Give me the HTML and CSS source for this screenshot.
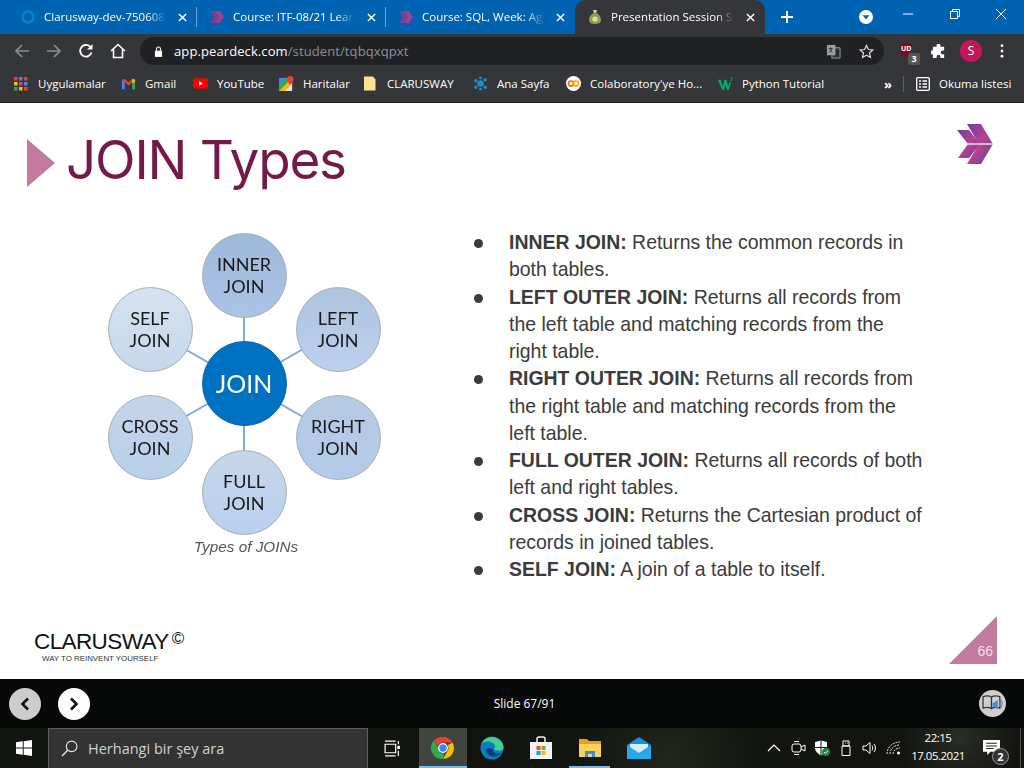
FILE: index.html
```html
<!DOCTYPE html>
<html lang="tr">
<head>
<meta charset="utf-8">
<title>Presentation Session</title>
<link rel="stylesheet" href="styles.css">
</head>
<body>
<svg class="defs" aria-hidden="true">
  <defs>
    <linearGradient id="chev" x1="0" y1="0" x2="1" y2="1">
      <stop offset="0" stop-color="#6b3fa0"/><stop offset=".5" stop-color="#b8438f"/><stop offset="1" stop-color="#5a3f9e"/>
    </linearGradient>
    <symbol id="chevrons" viewBox="0 0 36 40">
      <path fill="url(#chev)" d="M0 6h12l11 14-11 14H1l10-14z"/>
      <path fill="url(#chev)" d="M10 0h14l12 20-12 20H10l12-20z"/>
      <path fill="#fff" d="M4 19.4h32v1.2H4z"/>
    </symbol>
    <symbol id="favchev" viewBox="0 0 16 16">
      <path fill="#7d3f96" d="M1 2h5l4 6-4 6H1l4-6z"/>
      <path fill="#a0408f" d="M6 2h5l4 6-4 6H6l4-6z"/>
    </symbol>
    <symbol id="close" viewBox="0 0 10 10">
      <path d="M1 1l8 8M9 1l-8 8" stroke="#fff" stroke-width="1.6" fill="none"/>
    </symbol>
  </defs>
</svg>

<div class="tabstrip">
  <div class="tab">
    <svg class="fav" viewBox="0 0 16 16"><circle cx="8" cy="8" r="5.5" fill="none" stroke="#0a84c8" stroke-width="2.4"/></svg>
    <span class="tab-title">Clarusway-dev-750608</span>
    <svg class="tab-x"><use href="#close"/></svg>
  </div>
  <div class="tab">
    <svg class="fav"><use href="#favchev"/></svg>
    <span class="tab-title">Course: ITF-08/21 Learn</span>
    <svg class="tab-x"><use href="#close"/></svg>
  </div>
  <div class="tab tab-last">
    <svg class="fav"><use href="#favchev"/></svg>
    <span class="tab-title">Course: SQL, Week: Agg</span>
    <svg class="tab-x"><use href="#close"/></svg>
  </div>
  <div class="tab tab-active">
    <svg class="fav" viewBox="0 0 16 16"><path fill="#8f9a52" d="M6 1h4l-1 3c3 1 5 4 5 7 0 3-3 4-6 4s-6-1-6-4c0-3 2-6 5-7z"/><circle cx="8" cy="10" r="2.6" fill="#dfe48a"/><path d="M6 1h4l-1 3H7z" fill="#c9c9b0"/></svg>
    <span class="tab-title">Presentation Session Stu</span>
    <svg class="tab-x"><use href="#close"/></svg>
  </div>
  <svg class="newtab" viewBox="0 0 12 12"><path d="M6 0v12M0 6h12" stroke="#fff" stroke-width="2"/></svg>
  <svg class="profile-drop" viewBox="0 0 14 14"><circle cx="7" cy="7" r="7" fill="#fff"/><path d="M3.6 5.2h6.8L7 9.4z" fill="#0063b1"/></svg>
  <div class="winctl">
    <svg viewBox="0 0 12 12"><path d="M1 6h10" stroke="#fff" fill="none"/></svg>
    <svg viewBox="0 0 12 12"><path d="M1.5 3.5h7v7h-7zM3.5 3.5v-2h7v7h-2" stroke="#fff" fill="none"/></svg>
    <svg viewBox="0 0 12 12"><path d="M1 1l10 10M11 1L1 11" stroke="#fff" fill="none"/></svg>
  </div>
</div>

<div class="toolbar">
  <svg class="tb-btn" viewBox="0 0 16 16"><path d="M15 8H2M8 2L2 8l6 6" stroke="#8a8c8f" stroke-width="1.7" fill="none"/></svg>
  <svg class="tb-btn" viewBox="0 0 16 16"><path d="M1 8h13M8 2l6 6-6 6" stroke="#8a8c8f" stroke-width="1.7" fill="none"/></svg>
  <svg class="tb-btn" viewBox="0 0 16 16"><path d="M13.5 9.5A5.8 5.8 0 1 1 12 3.6" stroke="#fff" stroke-width="1.8" fill="none"/><path d="M14.5 1v5.5H9z" fill="#fff"/></svg>
  <svg class="tb-btn" viewBox="0 0 16 16"><path d="M1 8l7-6.500L15 8M3.500 6.500V14.500h9V6.500" stroke="#fff" stroke-width="1.6" fill="none"/></svg>
  <div class="omnibox">
    <svg class="lock" viewBox="0 0 10 12"><path d="M1 5h8v7H1z" fill="#fff"/><path d="M2.8 5V3.2a2.2 2.2 0 0 1 4.4 0V5" stroke="#fff" stroke-width="1.2" fill="none"/></svg>
    <span class="url"><span class="url-host">app.peardeck.com</span>/student/tqbqxqpxt</span>
    <svg class="omni-ic translate" viewBox="0 0 16 16"><path d="M8 4h7v11H6z" fill="#35363a" stroke="#9aa0a6"/><rect x="1" y="1" width="9" height="11" fill="#9aa0a6"/><path d="M3 5h4M5 3.500v1.500M3.500 9l3-4M4 6l3 3M10 8h4M12 7v1M10.500 13l3-5M11 10l3 3" stroke="#202124" stroke-width=".9" fill="none"/></svg>
    <svg class="omni-ic" viewBox="0 0 16 16"><path d="M8 1.500l2 4.400 4.800.5-3.600 3.200 1 4.700L8 11.900l-4.200 2.400 1-4.700L1.200 6.400 6 5.900z" stroke="#dcdcdc" stroke-width="1.3" fill="none"/></svg>
  </div>
  <div class="ublock">
    <svg viewBox="0 0 16 18"><path d="M8 0l7 2.500c0 7-2 12-7 15.500C3 14.500 1 9.500 1 2.500z" fill="#7b0f12"/></svg>
    <span class="ub-txt">UD</span>
    <span class="ub-badge">3</span>
  </div>
  <svg class="puzzle" viewBox="0 0 16 16"><path fill="#fff" d="M6 1.500a2 2 0 0 1 4 0V3h4v4h-1.500a2 2 0 0 0 0 4H14v4h-4v-1.500a2 2 0 0 0-4 0V15H2v-4H.8a2 2 0 0 1 0-4H2V3h4z"/></svg>
  <span class="avatar">S</span>
  <svg class="kebab" viewBox="0 0 4 16"><circle cx="2" cy="2" r="1.600" fill="#fff"/><circle cx="2" cy="8" r="1.600" fill="#fff"/><circle cx="2" cy="14" r="1.600" fill="#fff"/></svg>
</div>

<div class="bookmarks">
  <div class="bm bm-apps">
    <svg viewBox="0 0 14 14"><g><rect x="0" y="0" width="3.500" height="3.500" fill="#ea4335"/><rect x="5" y="0" width="3.500" height="3.500" fill="#4285f4"/><rect x="10" y="0" width="3.500" height="3.500" fill="#ea4335"/><rect x="0" y="5" width="3.500" height="3.500" fill="#fbbc05"/><rect x="5" y="5" width="3.500" height="3.500" fill="#ea4335"/><rect x="10" y="5" width="3.500" height="3.500" fill="#4285f4"/><rect x="0" y="10" width="3.500" height="3.500" fill="#34a853"/><rect x="5" y="10" width="3.500" height="3.500" fill="#fbbc05"/><rect x="10" y="10" width="3.500" height="3.500" fill="#ea4335"/></g></svg>
    <span>Uygulamalar</span>
  </div>
  <div class="bm bm-gmail">
    <svg viewBox="0 0 16 14"><path d="M1 3v10h3V6z" fill="#4285f4"/><path d="M15 3v10h-3V6z" fill="#34a853"/><path d="M1 3l3-1 4 4 4-4 3 1-7 6z" fill="#ea4335"/><path d="M12 2l3 1v2l-3 2z" fill="#fbbc05"/></svg>
    <span>Gmail</span>
  </div>
  <div class="bm bm-yt">
    <svg viewBox="0 0 16 12"><rect width="16" height="11" y=".5" rx="2.500" fill="#f00"/><path d="M6.500 3.500l4 2.500-4 2.500z" fill="#fff"/></svg>
    <span>YouTube</span>
  </div>
  <div class="bm bm-maps">
    <svg viewBox="0 0 16 16"><rect y="2" width="14" height="14" fill="#34a853"/><path d="M0 16L14 2v6l-8 8z" fill="#fbbc05"/><path d="M6 16l8-8v8z" fill="#dfe3e8"/><path d="M0 2h8L0 10z" fill="#4285f4"/><path d="M12 0a3.500 3.500 0 0 1 3.500 3.500C15.500 6 12 9.500 12 9.500S8.500 6 8.500 3.500A3.500 3.500 0 0 1 12 0z" fill="#ea4335"/></svg>
    <span>Haritalar</span>
  </div>
  <div class="bm bm-folder">
    <svg viewBox="0 0 12 14"><path d="M0 0h9l2.500 3v11H0z" fill="#fde293"/></svg>
    <span>CLARUSWAY</span>
  </div>
  <div class="bm bm-ana">
    <svg viewBox="0 0 16 16"><g fill="#1f8fc8"><circle cx="8" cy="8" r="3.500"/><circle cx="3" cy="5" r="1.800"/><circle cx="13" cy="4" r="1.800"/><circle cx="3" cy="12" r="1.800"/><circle cx="13" cy="12" r="1.800"/><circle cx="8" cy="2" r="1.500"/><circle cx="8" cy="14" r="1.500"/></g></svg>
    <span>Ana Sayfa</span>
  </div>
  <div class="bm bm-colab">
    <svg viewBox="0 0 16 16"><circle cx="8" cy="8" r="8" fill="#fff"/><circle cx="5.300" cy="8" r="2.700" fill="none" stroke="#e8710a" stroke-width="1.800"/><circle cx="10.700" cy="8" r="2.700" fill="none" stroke="#f9ab00" stroke-width="1.800"/></svg>
    <span>Colaboratory'ye Ho...</span>
  </div>
  <div class="bm bm-w3">
    <svg viewBox="0 0 16 14"><path d="M0 3h3l2 7 2-7h2l2 7 1-4h2l-2.500 8h-2L8 8l-1.500 6h-2z" fill="#04aa6d"/><path d="M13 1h2.500l-1 1.500a1 1 0 1 1-1.500 1" stroke="#04aa6d" stroke-width=".8" fill="none"/></svg>
    <span>Python Tutorial</span>
  </div>
  <div class="bm-end">
    <span class="more">»</span>
    <span class="bm-sep"></span>
    <svg class="reading" viewBox="0 0 14 14"><rect x=".7" y=".7" width="12.600" height="12.600" rx="1" fill="none" stroke="#fff" stroke-width="1.300"/><path d="M3 4h2M6.500 4H11M3 7h2M6.500 7H11M3 10h2M6.500 10H11" stroke="#fff" stroke-width="1.300"/></svg>
    <span class="bm-text">Okuma listesi</span>
  </div>
</div>

<main class="slide">
  <header class="slide-head">
    <span class="title-arrow"></span>
    <h1 class="slide-title">JOIN Types</h1>
    <svg class="slide-logo"><use href="#chevrons"/></svg>
  </header>
  <section class="slide-body">
    <figure class="diagram">
      <svg class="spokes" viewBox="0 0 290 320">
        <path d="M144 50v220M50 104l188 108M238 104L50 212" stroke="#7eaadc" stroke-width="2" fill="none"/>
      </svg>
      <div class="node n-inner">INNER<br>JOIN</div>
      <div class="node n-left">LEFT<br>JOIN</div>
      <div class="node n-right">RIGHT<br>JOIN</div>
      <div class="node n-full">FULL<br>JOIN</div>
      <div class="node n-cross">CROSS<br>JOIN</div>
      <div class="node n-self">SELF<br>JOIN</div>
      <div class="node n-center">JOIN</div>
      <figcaption class="caption">Types of JOINs</figcaption>
    </figure>
    <ul class="joins">
      <li><b>INNER JOIN:</b> Returns the common records in both tables.</li>
      <li><b>LEFT OUTER JOIN:</b> Returns all records from the left table and matching records from the right table.</li>
      <li><b>RIGHT OUTER JOIN:</b> Returns all records from the right table and matching records from the left table.</li>
      <li><b>FULL OUTER JOIN:</b> Returns all records of both left and right tables.</li>
      <li><b>CROSS JOIN:</b> Returns the Cartesian product of records in joined tables.</li>
      <li><b>SELF JOIN:</b> A join of a table to itself.</li>
    </ul>
  </section>
  <footer class="slide-foot">
    <div class="brand">
      <div class="brand-name">CLARUSWAY<sup class="brand-c">©</sup></div>
      <div class="brand-tag">WAY TO REINVENT YOURSELF</div>
    </div>
    <div class="pageno"><span>66</span></div>
  </footer>
</main>

<div class="deckbar">
  <button class="nav-btn nav-prev"><svg viewBox="0 0 10 14"><path d="M8 1.500L2.500 7 8 12.500" stroke="#111" stroke-width="2.600" fill="none"/></svg></button>
  <button class="nav-btn nav-next"><svg viewBox="0 0 10 14"><path d="M2 1.500L7.500 7 2 12.500" stroke="#111" stroke-width="2.600" fill="none"/></svg></button>
  <span class="counter">Slide 67/91</span>
  <span class="audio"><svg viewBox="0 0 20 18"><path d="M1 2.500c3-1 6-1 8 .5 2-1.500 5-1.500 8-.5v11c-3-1-6-1-8 .5-2-1.500-5-1.500-8-.5zM9 3v11" stroke="#333" stroke-width="1.200" fill="none"/><path d="M10 8h2l3-2.500v9L12 12h-2z" fill="#3f8fd0"/><path d="M16.500 7c1 1.500 1 3 0 4.500M18 5.500c1.500 2.500 1.500 5 0 7.500" stroke="#3f8fd0" stroke-width="1" fill="none"/></svg></span>
</div>

<div class="taskbar">
  <div class="start"><svg viewBox="0 0 16 16"><path fill="#fff" d="M0 2.300L6.800 1.300V7.600H0zM7.700 1.200L16 0V7.600H7.700zM0 8.400H6.800V14.700L0 13.700zM7.700 8.400H16V16L7.700 14.800z"/></svg></div>
  <div class="search">
    <svg viewBox="0 0 16 16"><circle cx="10" cy="6" r="5" stroke="#e6e6e6" stroke-width="1.100" fill="none"/><path d="M6.500 9.500L1 15" stroke="#e6e6e6" stroke-width="1.300"/></svg>
    <span>Herhangi bir şey ara</span>
  </div>
  <div class="taskview"><svg viewBox="0 0 16 16"><path d="M1 1h10M1 15h10M1 4h10v8H1zM13.500 1v3M13.500 10v5" stroke="#fff" stroke-width="1.100" fill="none"/><rect x="12.500" y="5.500" width="2.500" height="3" fill="#fff"/></svg></div>
  <div class="tile tile-active">
    <svg viewBox="0 0 24 24"><path d="M12 1a11 11 0 0 1 9.500 5.500H12a5.500 5.500 0 0 0-5 3.200L3 4.500A11 11 0 0 1 12 1z" fill="#ea4335"/><path d="M21.500 6.500A11 11 0 0 1 12 23l4.700-8.200a5.500 5.500 0 0 0 0-5.500z" fill="#fbbc05"/><path d="M12 23A11 11 0 0 1 3 4.500l4.700 8.200a5.500 5.500 0 0 0 5.500 4.800z" fill="#34a853"/><circle cx="12" cy="12" r="4.300" fill="#4285f4" stroke="#fff" stroke-width="1.200"/></svg>
  </div>
  <div class="tile">
    <svg viewBox="0 0 24 24"><circle cx="12" cy="12" r="11.500" fill="#0c7bc4"/><path d="M23.500 12c0-6-5-11-11.500-11C7 1 3 4 1.500 8 4 5.500 8 5 11 6c4 1.500 5 5 3 7.500 3 1.500 9.500 2 9.500-1.500z" fill="#45d08a"/><path d="M6 14c0 5 6 8 11 6 2-.8 3.500-2 4.500-3.500-4 2-9 1-8.500-3.500-3-1-7-1-7 1z" fill="#0b3f78"/></svg>
  </div>
  <div class="tile">
    <svg viewBox="0 0 24 24"><path d="M1 6h22v17H1z" fill="#f3f3f3"/><path d="M8 6V3a2 2 0 0 1 2-2h4a2 2 0 0 1 2 2v3" stroke="#f3f3f3" stroke-width="1.500" fill="none"/><rect x="7.500" y="10" width="4" height="4" fill="#f25022"/><rect x="12.500" y="10" width="4" height="4" fill="#7fba00"/><rect x="7.500" y="15" width="4" height="4" fill="#00a4ef"/><rect x="12.500" y="15" width="4" height="4" fill="#ffb900"/></svg>
  </div>
  <div class="tile tile-open">
    <svg viewBox="0 0 24 24"><path d="M1 3h8l2 2h12v16H1z" fill="#e3a21a"/><path d="M1 8h22v13H1z" fill="#fcd25f"/><path d="M7 21v-6h10v6h-3v-3h-4v3z" fill="#3a8fd6"/></svg>
  </div>
  <div class="tile">
    <svg viewBox="0 0 24 24"><path d="M0 9l12-8 12 8v14H0z" fill="#1490df"/><path d="M0 9l12 8 12-8v14H0z" fill="#28a8ea"/><path d="M3 8h18v3l-9 6-9-6z" fill="#d3edfb"/></svg>
  </div>
  <div class="tray">
    <svg class="tray-ic" viewBox="0 0 16 16"><path d="M2 11l6-6 6 6" stroke="#fff" stroke-width="1.200" fill="none"/></svg>
    <svg class="tray-ic" viewBox="0 0 16 16"><rect x="2" y="4" width="9" height="8" rx="2" stroke="#fff" fill="none"/><path d="M11 7l4-2v6l-4-2M4 1.500h5M4 14.500h5" stroke="#fff" fill="none"/></svg>
    <svg class="tray-ic" viewBox="0 0 16 16"><path d="M1 2l6-1.500L13 2v6c0 3-3 6-6 7.500C4 14 1 11 1 8z" fill="#fff"/><path d="M7 .5V15.500M1 7.500h12" stroke="#14180f"/><circle cx="12" cy="12" r="4" fill="#138a3f"/><path d="M10 12l1.500 1.500 2.500-3" stroke="#fff" fill="none"/></svg>
    <svg class="tray-ic" viewBox="0 0 16 16"><path d="M5 1h6v5H5zM4 6h8v9.500H4zM7 3h.8M9 3h.8" stroke="#fff" fill="none"/></svg>
    <svg class="tray-ic" viewBox="0 0 16 16"><path d="M1 6h3l4-3.500v11L4 10H1z" stroke="#fff" fill="none"/><path d="M10 5.500c1 1.500 1 3.500 0 5M12 4c2 2.500 2 5.500 0 8" stroke="#fff" fill="none"/></svg>
    <svg class="tray-ic" viewBox="0 0 16 16"><path d="M1 14c0-7 6-12 13-12M4 14c0-5 4-9 10-9M7 14c0-3 3-6 7-6" stroke="#ddd" stroke-dasharray="2 1" fill="none"/><circle cx="12.500" cy="13" r="1.500" fill="#fff"/></svg>
  </div>
  <div class="clock"><span>22:15</span><span>17.05.2021</span></div>
  <div class="notify">
    <svg viewBox="0 0 16 14"><path d="M0 0h16v11H7l-3 3v-3H0z" fill="#fff"/><path d="M3 3h10M3 5.500h10M3 8h7" stroke="#222"/></svg>
    <span class="notify-n">2</span>
  </div>
  <span class="show-desktop"></span>
</div>
</body>
</html>
```

FILE: styles.css
```css
* { box-sizing: border-box; }
html, body { margin: 0; padding: 0; }
body {
  width: 1024px;
  height: 768px;
  overflow: hidden;
  font-family: "Open Sans", "Liberation Sans", sans-serif;
  background: #fff;
  display: flex;
  flex-direction: column;
}
.defs { position: absolute; width: 0; height: 0; }

/* tab strip */
.tabstrip {
  height: 34px;
  flex: none;
  background: #0063b1;
  display: flex;
  align-items: center;
  padding-left: 8px;
}
.tab {
  position: relative;
  width: 189px;
  height: 34px;
  display: flex;
  align-items: center;
  padding: 0 10px 0 12px;
  color: #fff;
}
.tab::after {
  content: "";
  position: absolute;
  right: 0;
  top: 7px;
  width: 1px;
  height: 20px;
  background: #6f9fcb;
}
.tab-last::after, .tab-active::after { display: none; }
.tab-active {
  width: 190px;
  background: #35363a;
  border-radius: 10px 10px 0 0;
}
.fav { width: 16px; height: 16px; flex: none; }
.tab-title {
  flex: 1;
  min-width: 0;
  margin-left: 8px;
  padding-bottom: 2px;
  font-size: 11.5px;
  white-space: nowrap;
  overflow: hidden;
  -webkit-mask-image: linear-gradient(to right, #000 85%, transparent 100%);
  mask-image: linear-gradient(to right, #000 85%, transparent 100%);
}
.tab-x { width: 9px; height: 9px; flex: none; margin-left: 12px; }
.newtab { width: 12px; height: 12px; margin-left: 16px; flex: none; }
.profile-drop { width: 14px; height: 14px; margin-left: 66px; flex: none; }
.winctl {
  display: flex;
  margin-left: auto;
  width: 138px;
  height: 34px;
  justify-content: space-between;
  padding: 8px 17px 0 16px;
  align-self: flex-start;
  flex: none;
}
.winctl svg { width: 12px; height: 12px; }

/* toolbar */
.toolbar {
  height: 34px;
  flex: none;
  background: #35363a;
  display: flex;
  align-items: center;
  padding-left: 14px;
}
.tb-btn { width: 16px; height: 16px; flex: none; margin-right: 16px; }
.omnibox {
  width: 744px;
  height: 28px;
  margin-left: -2px;
  background: #202124;
  border-radius: 14px;
  display: flex;
  align-items: center;
  padding-left: 14px;
}
.lock { width: 9px; height: 11px; flex: none; }
.url {
  margin-left: 11px;
  font-size: 13px;
  color: #8e9094;
  flex: 1;
  letter-spacing: .1px;
}
.url-host { color: #fff; }
.omni-ic { width: 15px; height: 15px; flex: none; margin-right: 10px; }
.translate { margin-right: 18px; }
.ublock { position: relative; width: 16px; height: 18px; margin-left: 15px; flex: none; }
.ublock svg { width: 14px; height: 16px; display: block; }
.ub-txt { position: absolute; left: 2px; top: 2px; font-size: 7px; font-weight: 700; color: #fff; line-height: 10px; }
.ub-badge {
  position: absolute;
  left: 9px;
  top: 11px;
  width: 12px;
  height: 12px;
  border-radius: 2px;
  background: #555;
  color: #fff;
  font-size: 9px;
  font-weight: 700;
  line-height: 12px;
  text-align: center;
}
.puzzle { width: 15px; height: 15px; flex: none; margin-left: 16px; }
.avatar {
  width: 22px;
  height: 22px;
  flex: none;
  border-radius: 50%;
  background: #c2185b;
  color: #fff;
  font-size: 12px;
  line-height: 22px;
  text-align: center;
  margin-left: 14px;
}
.kebab { width: 4px; height: 14px; flex: none; margin-left: 18px; }

/* bookmarks */
.bookmarks {
  height: 35px;
  flex: none;
  background: #35363a;
  border-bottom: 1px solid #1c1d1f;
  display: grid;
  grid-template-columns: 108px 71px 86px 85px 109px 93px 152px 160px 1fr;
  align-items: center;
  padding: 0 0 3px 13px;
  font-size: 11.5px;
  color: #fff;
}
.bm { display: flex; align-items: center; white-space: nowrap; padding-left: 1px; }
.bm svg { width: 15px; height: 15px; flex: none; margin-right: 9px; }
.bm-apps svg { width: 14px; height: 14px; margin-right: 10px; }
.bm-gmail { padding-left: 0; }
.bm-folder svg { width: 12px; margin-right: 11px; }
.bm-end { display: flex; align-items: center; padding-left: 7px; }
.more { font-size: 13px; font-weight: 700; width: 15px; }
.bm-sep { width: 1px; height: 16px; background: #5f6368; margin-left: 4px; }
.reading { width: 14px; height: 14px; flex: none; margin-left: 12px; }
.bm-text { margin-left: 9px; white-space: nowrap; }

/* slide */
.slide {
  height: 576px;
  flex: none;
  background: #fff;
  display: flex;
  flex-direction: column;
}
.slide-head {
  height: 111px;
  flex: none;
  display: flex;
  align-items: flex-start;
  padding: 21px 31px 0 27px;
}
.title-arrow {
  width: 0;
  height: 0;
  margin-top: 15px;
  border-left: 28px solid #c17ba0;
  border-top: 24.5px solid transparent;
  border-bottom: 24.5px solid transparent;
  flex: none;
}
.slide-title {
  margin: 3px 0 0 11px;
  font-family: "Inter", "Lato", sans-serif;
  font-weight: 400;
  font-size: 53px;
  letter-spacing: -1.2px;
  line-height: 66px;
  color: #731a4b;
  flex: 1;
  filter: blur(.3px);
}
.slide-logo { width: 36px; height: 40px; flex: none; }
.slide-body {
  flex: none;
  height: 382px;
  display: flex;
}
.diagram {
  position: relative;
  margin: 0 0 0 100px;
  width: 290px;
  flex: none;
  height: 340px;
  filter: blur(.35px);
}
.spokes { position: absolute; left: 0; top: 11px; width: 290px; height: 320px; }
.node {
  position: absolute;
  width: 85px;
  height: 85px;
  margin: -42.5px 0 0 -42.5px;
  border-radius: 50%;
  border: 1px solid #a4acb8;
  display: flex;
  align-items: center;
  justify-content: center;
  text-align: center;
  font-family: "Lato", sans-serif;
  font-size: 18px;
  line-height: 22.5px;
  color: #1a1a1a;
}
.n-inner { left: 144px; top: 61px; background: linear-gradient(#9fb9d8, #a9c4e6); }
.n-left { left: 238px; top: 115px; background: linear-gradient(#adc3de, #bbd1ee); }
.n-right { left: 238px; top: 223px; background: linear-gradient(#b5cae3, #b3cbea); }
.n-full { left: 144px; top: 278px; background: linear-gradient(#c6d6ea, #b9d0ee); }
.n-cross { left: 50px; top: 223px; background: linear-gradient(#c4d5e9, #b9cfea); }
.n-self { left: 50px; top: 115px; background: linear-gradient(#d5e2f0, #c6d8ee); }
.n-center {
  left: 144px;
  top: 169px;
  background: #0070c0;
  border-color: #0566ac;
  color: #fff;
  font-size: 25px;
}
.caption {
  position: absolute;
  left: 0;
  right: 0;
  top: 324px;
  padding-left: 2px;
  text-align: center;
  font-family: "Liberation Sans", sans-serif;
  font-style: italic;
  font-size: 15.3px;
  line-height: 18px;
  color: #555;
}
.joins {
  list-style: none;
  margin: 15px 0 0 83px;
  padding: 0;
  width: 454px;
  font-family: "Liberation Sans", sans-serif;
  font-size: 19.45px;
  line-height: 27.25px;
  color: #3b3b3b;
}
.joins li { position: relative; padding-left: 36px; }
.joins li::before {
  content: "";
  position: absolute;
  left: 1px;
  top: 10px;
  width: 9px;
  height: 9px;
  border-radius: 50%;
  background: #3b3b3b;
}
.slide-foot {
  flex: 1;
  display: flex;
  justify-content: space-between;
  align-items: flex-start;
  padding: 20px 27px 0 34px;
}
.brand { padding-top: 15px; color: #111; }
.brand-name {
  font-family: "Liberation Sans", sans-serif;
  font-size: 22.5px;
  line-height: 22px;
  letter-spacing: -.6px;
}
.brand-c { font-size: 17px; line-height: 0; vertical-align: 5px; margin-left: 3px; }
.brand-tag {
  font-family: "Liberation Sans", sans-serif;
  font-size: 7.9px;
  line-height: 12px;
  margin: 0 0 0 8px;
  color: #333;
}
.pageno {
  width: 48px;
  height: 48px;
  background: #c17ba0;
  clip-path: polygon(100% 0, 100% 100%, 0 100%);
  display: flex;
  align-items: flex-end;
  justify-content: flex-end;
  padding: 0 4px 5px 0;
  color: #f3dfe9;
  font-family: "Liberation Sans", sans-serif;
  font-size: 14px;
  line-height: 16px;
}

/* deck bar */
.deckbar {
  height: 49px;
  flex: none;
  background: #070909;
  display: flex;
  align-items: center;
  padding: 0 18px 0 9px;
}
.nav-btn {
  width: 32px;
  height: 32px;
  border: 0;
  padding: 0;
  border-radius: 50%;
  background: #fff;
  display: flex;
  align-items: center;
  justify-content: center;
  flex: none;
}
.nav-prev { background: #ccc; margin-right: 17px; }
.nav-btn svg { width: 10px; height: 14px; }
.counter {
  flex: 1;
  text-align: center;
  padding-right: 20px;
  color: #fff;
  font-size: 12px;
  font-weight: 500;
}
.audio {
  width: 27px;
  height: 27px;
  border-radius: 50%;
  background: #cfcfcf;
  display: flex;
  align-items: center;
  justify-content: center;
  flex: none;
}
.audio svg { width: 21px; height: 19px; }

/* taskbar */
.taskbar {
  height: 40px;
  flex: none;
  display: flex;
  align-items: center;
  color: #fff;
  background:
    radial-gradient(circle at 960px 10px, #2a2d26 0, transparent 60px),
    radial-gradient(circle at 670px 30px, #22261d 0, transparent 90px),
    #12150f;
}
.start { width: 48px; display: flex; justify-content: center; flex: none; }
.start svg { width: 16px; height: 16px; }
.search {
  width: 320px;
  height: 40px;
  flex: none;
  background: #333;
  border: 1px solid #5e5e5e;
  border-bottom-width: 0;
  display: flex;
  align-items: center;
  padding-left: 12px;
  font-size: 14.5px;
  color: #d0d0d0;
}
.search svg { width: 17px; height: 17px; flex: none; margin-right: 10px; }
.taskview { width: 51px; display: flex; justify-content: center; flex: none; padding-right: 3px; }
.taskview svg { width: 17px; height: 17px; }
.tile {
  width: 49px;
  height: 40px;
  flex: none;
  display: flex;
  align-items: center;
  justify-content: center;
}
.tile svg { width: 24px; height: 24px; }
.tile-active { background: #40453d; border-bottom: 2px solid #76b9ed; padding-top: 2px; width: 48px; }
.tile-open { position: relative; }
.tile-open::after {
  content: "";
  position: absolute;
  left: 4px;
  right: 4px;
  bottom: 0;
  height: 2px;
  background: #76b9ed;
}
.tray { display: flex; margin-left: auto; align-items: center; }
.tray-ic { width: 16px; height: 16px; margin: 0 4px; flex: none; }
.clock {
  width: 70px;
  margin-left: -3px;
  display: flex;
  flex-direction: column;
  align-items: center;
  font-size: 11.5px;
  letter-spacing: -.5px;
  line-height: 18px;
  flex: none;
  padding-bottom: 2px;
}
.notify { position: relative; width: 38px; height: 40px; flex: none; }
.notify svg { position: absolute; left: 10px; top: 12px; width: 17px; height: 15px; }
.notify-n {
  position: absolute;
  left: 19px;
  top: 20px;
  width: 17px;
  height: 17px;
  border-radius: 50%;
  background: #333;
  border: 1px solid #9a9a9a;
  font-size: 11px;
  font-weight: 700;
  line-height: 15px;
  text-align: center;
}
.show-desktop { width: 14px; height: 40px; border-left: 1px solid #555; margin-left: 9px; flex: none; margin-right: -10px; }
```
